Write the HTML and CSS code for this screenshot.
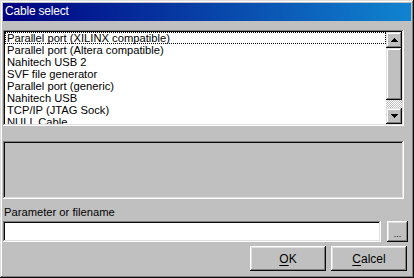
FILE: index.html
```html
<!DOCTYPE html>
<html lang="en">
<head>
  <meta charset="UTF-8">
  <title>Cable select</title>
  <link rel="stylesheet" href="styles.css">
</head>
<body>
  <div class="window">
    <div class="titlebar">Cable select</div>

    <div class="listbox">
      <ul class="items">
        <li class="focused">Parallel port (XILINX compatible)</li>
        <li>Parallel port (Altera compatible)</li>
        <li>Nahitech USB 2</li>
        <li>SVF file generator</li>
        <li>Parallel port (generic)</li>
        <li>Nahitech USB</li>
        <li>TCP/IP (JTAG Sock)</li>
        <li>NULL Cable</li>
      </ul>
      <div class="scrollbar">
        <div class="sb-btn">
          <svg width="7" height="4" viewBox="0 0 7 4"><path d="M3 0h1v1h1v1h1v1h1v1H0V3h1V2h1V1h1z" fill="#000"/></svg>
        </div>
        <div class="sb-thumb"></div>
        <div class="sb-track"></div>
        <div class="sb-btn">
          <svg width="7" height="4" viewBox="0 0 7 4"><path d="M0 0h7v1H6v1H5v1H4v1H3V3H2V2H1V1H0z" fill="#000"/></svg>
        </div>
      </div>
    </div>

    <div class="info-panel"></div>

    <div class="param-label">Parameter or filename</div>
    <div class="param-row">
      <input class="param-input" type="text">
      <button class="btn browse">...</button>
    </div>

    <div class="actions">
      <button class="btn action"><u>O</u>K</button>
      <button class="btn action"><u>C</u>alcel</button>
    </div>
  </div>
</body>
</html>
```

FILE: styles.css
```css
body { margin: 0; background: #c0c0c0; font-family: "Liberation Sans", Arial, sans-serif; font-size: 11.5px; color: #000; }

.window { width: 414px; height: 278px; box-sizing: border-box; padding: 3px; background: #c0c0c0; display: flex; flex-direction: column;
  box-shadow: inset -1px -1px #0a0a0a, inset 1px 1px #dfdfdf, inset -2px -2px #808080, inset 2px 2px #fff; }

.titlebar { height: 18px; line-height: 17px; padding-left: 2px; color: #fff; font-size: 12px; letter-spacing: -0.2px;
  background: linear-gradient(90deg, #000080, #1084d0); }

.listbox { margin-top: 9px; width: 401px; height: 96px; box-sizing: border-box; padding: 2px; background: #fff; display: flex;
  box-shadow: inset -1px -1px #fff, inset 1px 1px #808080, inset -2px -2px #dfdfdf, inset 2px 2px #0a0a0a; }
.items { flex: 1; margin: 0; padding: 0; list-style: none; overflow: hidden; font-size: 11.2px; }
.items li { height: 12px; line-height: 12px; padding-left: 2px; white-space: nowrap; }
.items li.focused { outline: 1px dotted #000; outline-offset: -1px; }

.scrollbar { width: 16px; display: flex; flex-direction: column; }
.sb-btn { height: 16px; box-sizing: border-box; background: #c0c0c0; display: flex; align-items: center; justify-content: center;
  box-shadow: inset -1px -1px #0a0a0a, inset 1px 1px #dfdfdf, inset -2px -2px #808080, inset 2px 2px #fff; }
.sb-thumb { height: 52px; background: #c0c0c0;
  box-shadow: inset -1px -1px #0a0a0a, inset 1px 1px #dfdfdf, inset -2px -2px #808080, inset 2px 2px #fff; }
.sb-track { flex: 1; background: repeating-conic-gradient(#c0c0c0 0 25%, #fff 0 50%) 0 0 / 2px 2px; }

.info-panel { margin-top: 15px; width: 401px; height: 58px; box-sizing: border-box;
  box-shadow: inset -1px -1px #fff, inset 1px 1px #808080, inset -2px -2px #dfdfdf, inset 2px 2px #0a0a0a; }

.param-label { margin-top: 5px; padding-left: 1px; height: 17px; line-height: 17px; font-size: 11.2px; }

.param-row { display: flex; gap: 6px; }
.param-input { width: 378px; height: 21px; box-sizing: border-box; margin: 0; border: none; background: #fff; font: inherit;
  box-shadow: inset -1px -1px #fff, inset 1px 1px #808080, inset -2px -2px #dfdfdf, inset 2px 2px #0a0a0a; }

.btn { margin: 0; padding: 0; border: none; background: #c0c0c0; color: #000; font: inherit; cursor: pointer;
  box-shadow: inset -1px -1px #0a0a0a, inset 1px 1px #fff, inset -2px -2px #808080, inset 2px 2px #dfdfdf; }
.browse { width: 21px; height: 21px; font-size: 9px; padding-top: 4px; }

.actions { margin-top: 4px; display: flex; justify-content: flex-end; gap: 5px; padding-right: 4px; }
.action { width: 76px; height: 25px; font-size: 12px; }
.action u { text-underline-offset: 2px; }
```
